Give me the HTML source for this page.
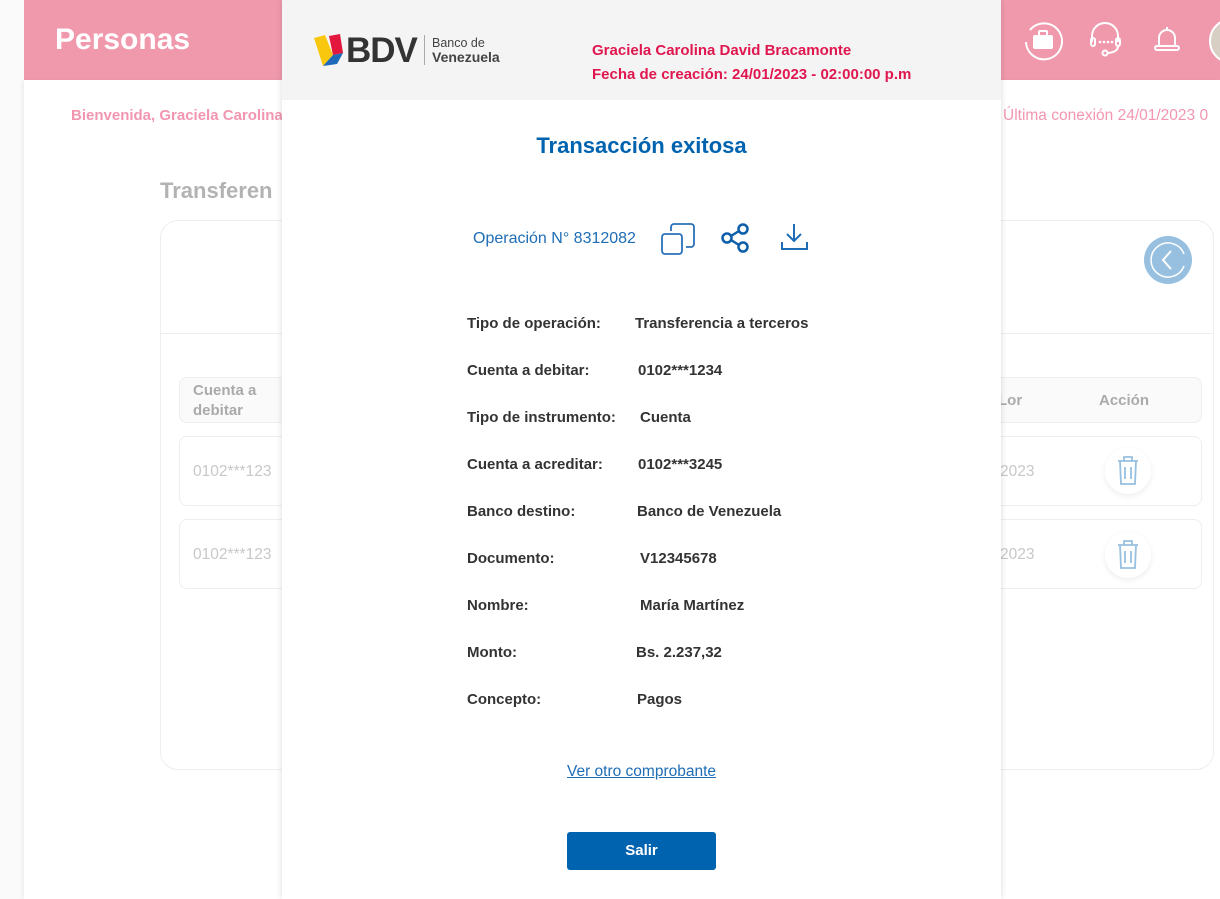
<!DOCTYPE html>
<html><head><meta charset="utf-8"><style>
*{margin:0;padding:0;box-sizing:border-box}
body{width:1220px;height:899px;overflow:hidden;position:relative;background:#fff;font-family:"Liberation Sans",sans-serif}
.a{position:absolute;white-space:nowrap}
.lbl{position:absolute;left:467px;font-size:15px;font-weight:bold;color:#333}
.val{position:absolute;font-size:15px;font-weight:bold;color:#333}
</style></head><body>
<div class="a" style="left:0;top:0;width:60px;height:899px;background:#fafafa;border-radius:0 24px 0 0"></div>
<div class="a" style="left:24px;top:0;width:1196px;height:80px;background:#f099ad"></div>
<div class="a" style="left:24px;top:80px;width:1196px;height:819px;background:#fff;box-shadow:-2px 0 4px rgba(0,0,0,.05)"></div>
<div class="a" style="left:55px;top:23px;font-size:30px;font-weight:bold;color:#fff">Personas</div>
<div class="a" style="left:71px;top:107px;font-size:15px;font-weight:bold;color:#f296b0">Bienvenida, Graciela Carolina</div>
<div class="a" style="left:1003px;top:107px;font-size:15.5px;color:#f296b0">Última conexión 24/01/2023 0</div>
<div class="a" style="left:160px;top:178px;font-size:22px;font-weight:bold;color:#b3b3b3">Transferen</div>
<svg class="a" style="left:1022px;top:20px" width="42" height="42" viewBox="0 0 42 42"><path d="M8 10 A18 18 0 1 1 4 22" fill="none" stroke="#fff" stroke-width="2"/><rect x="11" y="15" width="20" height="14" rx="2" fill="#fff"/><rect x="17" y="11" width="8" height="5" rx="1" fill="none" stroke="#fff" stroke-width="2"/></svg>
<svg class="a" style="left:1088px;top:22px" width="36" height="36" viewBox="0 0 36 36"><path d="M4 20 V14 A13 13 0 0 1 30 14 V20" fill="none" stroke="#fff" stroke-width="2"/><rect x="3" y="16" width="4" height="8" rx="2" fill="none" stroke="#fff" stroke-width="2"/><rect x="28" y="16" width="4" height="8" rx="2" fill="none" stroke="#fff" stroke-width="2"/><path d="M30 24 Q30 30 20 31" fill="none" stroke="#fff" stroke-width="2"/><circle cx="17" cy="31" r="2.5" fill="none" stroke="#fff" stroke-width="2"/><circle cx="12" cy="20" r="1.3" fill="#fff"/><circle cx="16" cy="20" r="1.3" fill="#fff"/><circle cx="20" cy="20" r="1.3" fill="#fff"/><circle cx="24" cy="20" r="1.3" fill="#fff"/></svg>
<svg class="a" style="left:1152px;top:24px" width="30" height="30" viewBox="0 0 30 30"><path d="M7 22 V14 A8 8 0 0 1 23 14 V22" fill="none" stroke="#fff" stroke-width="2"/><rect x="3" y="22" width="24" height="4" rx="2" fill="none" stroke="#fff" stroke-width="2"/><path d="M15 3 V6" stroke="#fff" stroke-width="2"/></svg>
<div class="a" style="left:1209px;top:18px;width:46px;height:46px;border-radius:50%;background:#d8cfc4;border:2px solid #fff"></div>
<div class="a" style="left:160px;top:220px;width:1054px;height:550px;border:1px solid #eee;border-radius:18px;background:#fff"></div>
<div class="a" style="left:160px;top:333px;width:1054px;height:1px;background:#eee"></div>
<div class="a" style="left:1144px;top:236px;width:48px;height:48px;border-radius:50%;background:#97c0e0"><svg width="48" height="48" viewBox="0 0 48 48"><path d="M40 30 A17 17 0 1 1 40 18" fill="none" stroke="#fff" stroke-width="1.5"/><path d="M27 15 L19 24 L27 33" fill="none" stroke="#fff" stroke-width="2"/></svg></div>
<div class="a" style="left:179px;top:377px;width:1023px;height:46px;border:1px solid #eee;border-radius:8px;background:#fafafa"></div>
<div class="a" style="left:193px;top:381px;font-size:15px;font-weight:bold;color:#aaa;line-height:20px">Cuenta a<br>debitar</div>
<div class="a" style="left:998px;top:392px;font-size:15px;font-weight:bold;color:#aaa">Lor</div>
<div class="a" style="left:1099px;top:392px;font-size:15px;font-weight:bold;color:#aaa">Acción</div>
<div class="a" style="left:179px;top:436px;width:1023px;height:70px;border:1px solid #eee;border-radius:8px"></div>
<div class="a" style="left:179px;top:519px;width:1023px;height:70px;border:1px solid #eee;border-radius:8px"></div>
<div class="a" style="left:193px;top:463px;font-size:15.5px;color:#c8c8c8">0102***123</div>
<div class="a" style="left:193px;top:546px;font-size:15.5px;color:#c8c8c8">0102***123</div>
<div class="a" style="left:1000px;top:463px;font-size:15.5px;color:#c8c8c8">2023</div>
<div class="a" style="left:1000px;top:546px;font-size:15.5px;color:#c8c8c8">2023</div>
<div class="a" style="left:1105px;top:448px;width:46px;height:46px;border-radius:50%;box-shadow:0 2px 6px rgba(0,0,0,.08)"></div>
<div class="a" style="left:1105px;top:532px;width:46px;height:46px;border-radius:50%;box-shadow:0 2px 6px rgba(0,0,0,.08)"></div>
<svg class="a" style="left:1104px;top:447px" width="48" height="48" viewBox="0 0 48 48"><circle cx="24" cy="24" r="23" fill="#fff"/><path d="M14 14 H34 M20 14 V10 H28 V14 M16 14 L17 37 H31 L32 14 M21 20 V32 M27 20 V32" fill="none" stroke="#97c0e0" stroke-width="1.8"/></svg>
<svg class="a" style="left:1104px;top:531px" width="48" height="48" viewBox="0 0 48 48"><circle cx="24" cy="24" r="23" fill="#fff"/><path d="M14 14 H34 M20 14 V10 H28 V14 M16 14 L17 37 H31 L32 14 M21 20 V32 M27 20 V32" fill="none" stroke="#97c0e0" stroke-width="1.8"/></svg>
<div class="a" style="left:282px;top:0;width:719px;height:899px;background:#fff;box-shadow:0 0 6px rgba(0,0,0,.15)"></div>
<div class="a" style="left:282px;top:0;width:719px;height:100px;background:#f4f4f4"></div>
<svg class="a" style="left:313px;top:33px" width="34" height="34" viewBox="0 0 34 34"><path d="M1 5 L12 2 L20 22 L10 33 Z" fill="#f9c80e"/><path d="M16 3 L27 1 L30 20 L20 22 Z" fill="#e3173e"/><path d="M20 22 L30 20 L24 31 L10 33 Z" fill="#1e69b8"/></svg>
<div class="a" style="left:346px;top:31px;font-size:35px;font-weight:bold;color:#333;letter-spacing:-1px">BDV</div>
<div class="a" style="left:424px;top:35px;width:1px;height:30px;background:#aaa"></div>
<div class="a" style="left:432px;top:36px;font-size:12.5px;color:#444;line-height:14px">Banco de<br><b style="font-size:14px">Venezuela</b></div>
<div class="a" style="left:592px;top:42px;font-size:15px;font-weight:bold;color:#e0174f">Graciela Carolina David Bracamonte</div>
<div class="a" style="left:592px;top:66px;font-size:15px;font-weight:bold;color:#e0174f">Fecha de creación: 24/01/2023 - 02:00:00 p.m</div>
<div class="a" style="left:282px;width:719px;top:133px;text-align:center;font-size:22px;font-weight:bold;color:#0063af">Transacción exitosa</div>
<div class="a" style="left:473px;top:230px;font-size:16px;color:#1e6db5">Operación N° 8312082</div>
<svg class="a" style="left:660px;top:221px" width="38" height="36" viewBox="0 0 38 36"><rect x="2" y="13" width="20" height="20" rx="3" fill="none" stroke="#2a70b8" stroke-width="1.8"/><path d="M11 10 V6 A3 3 0 0 1 14 3 H31 A3 3 0 0 1 34 6 V23 A3 3 0 0 1 31 26 H26" fill="none" stroke="#2a70b8" stroke-width="1.8"/></svg>
<svg class="a" style="left:720px;top:222px" width="32" height="32" viewBox="0 0 32 32"><circle cx="23" cy="7" r="4.5" fill="none" stroke="#0d5ea8" stroke-width="2.5"/><circle cx="7" cy="16" r="4.5" fill="none" stroke="#0d5ea8" stroke-width="2.5"/><circle cx="23" cy="25" r="4.5" fill="none" stroke="#0d5ea8" stroke-width="2.5"/><path d="M11 14 L19 9 M11 18 L19 23" stroke="#0d5ea8" stroke-width="2.5"/></svg>
<svg class="a" style="left:780px;top:222px" width="30" height="30" viewBox="0 0 30 30"><path d="M14 2 V19 M7 12 L14 19 L21 12 M2 20 V27 H27 V20" fill="none" stroke="#1e6db5" stroke-width="2"/></svg>
<div class="lbl" style="top:315px">Tipo de operación:</div><div class="val" style="left:635px;top:315px">Transferencia a terceros</div>
<div class="lbl" style="top:362px">Cuenta a debitar:</div><div class="val" style="left:638px;top:362px">0102***1234</div>
<div class="lbl" style="top:409px">Tipo de instrumento:</div><div class="val" style="left:640px;top:409px">Cuenta</div>
<div class="lbl" style="top:456px">Cuenta a acreditar:</div><div class="val" style="left:638px;top:456px">0102***3245</div>
<div class="lbl" style="top:503px">Banco destino:</div><div class="val" style="left:637px;top:503px">Banco de Venezuela</div>
<div class="lbl" style="top:550px">Documento:</div><div class="val" style="left:640px;top:550px">V12345678</div>
<div class="lbl" style="top:597px">Nombre:</div><div class="val" style="left:640px;top:597px">María Martínez</div>
<div class="lbl" style="top:644px">Monto:</div><div class="val" style="left:636px;top:644px">Bs. 2.237,32</div>
<div class="lbl" style="top:691px">Concepto:</div><div class="val" style="left:637px;top:691px">Pagos</div>
<div class="a" style="left:282px;width:719px;top:763px;text-align:center;font-size:15.5px;color:#1e6db5;text-decoration:underline">Ver otro comprobante</div>
<div class="a" style="left:567px;top:832px;width:149px;height:38px;background:#0063af;border-radius:3px;color:#fff;font-size:15px;font-weight:bold;text-align:center;line-height:38px">Salir</div>
</body></html>
